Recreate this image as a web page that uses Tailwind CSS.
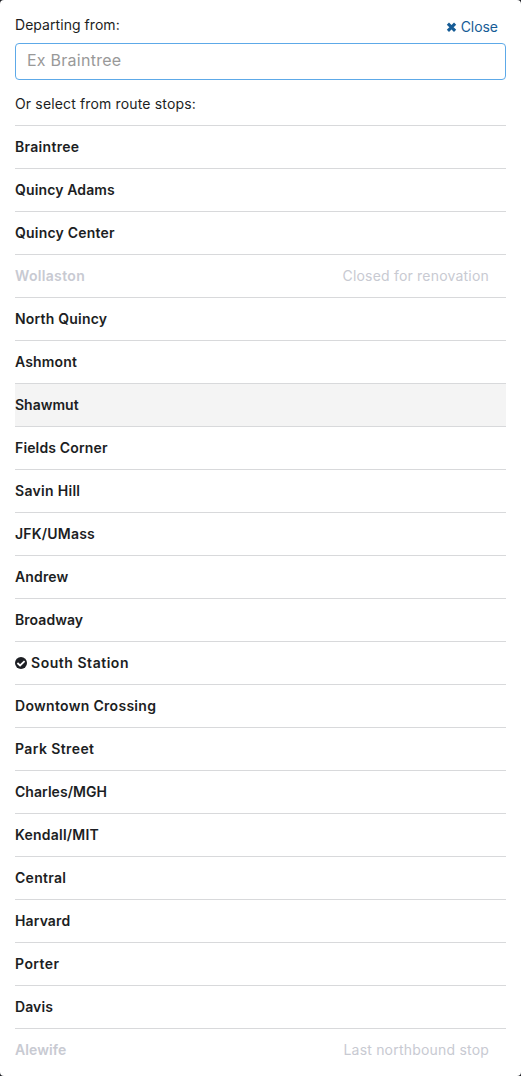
<!DOCTYPE html>
<html lang="en">
<head>
<meta charset="utf-8">
<title>Departing from</title>
<script src="https://cdn.jsdelivr.net/npm/@tailwindcss/browser@4"></script>
</head>
<body class="bg-[#1c1e23] font-['Inter',sans-serif] text-sm leading-[21px] text-[#1c1e23]">
<main class="h-[1076px] w-full overflow-hidden rounded bg-white px-[15px] pt-[14px]">
  <header class="flex h-[29px] items-start justify-between">
    <label for="stop" class="block tracking-[0.05px]">Departing from:</label>
    <a href="#" class="mr-2 mt-[2px] flex items-center gap-1 text-[#165c96]">
      <svg class="h-[14px] w-[11px]" viewBox="0 0 11 14"><path d="M1.9 3.6L9.1 10.8M9.1 3.6L1.9 10.8" fill="none" stroke="currentColor" stroke-width="3.1"/></svg>
      <span class="tracking-[-0.05px]">Close</span>
    </a>
  </header>
  <input id="stop" class="block h-[37px] w-full rounded border border-[#5da9e8] px-[11px] pb-[3px] text-base tracking-[0.25px] outline-none placeholder:text-[#999]" placeholder="Ex Braintree">
  <p class="mt-[13px] h-[32px] tracking-[0.15px]">Or select from route stops:</p>
  <ul id="stops" class="font-semibold"></ul>
</main>
<template id="row"><li class="flex h-[43px] items-center border-t border-[#d8d9db] pb-px"><span class="name"></span><span class="note ml-auto mr-[17px] font-normal tracking-[0.2px]"></span></li></template>
<template id="check"><svg class="mr-1 mt-px h-3 w-3" viewBox="0 0 12 12"><circle cx="6" cy="6" r="6" fill="#1c1e23"/><path d="M2.4 6L5.1 8.5L9.6 4.2" fill="none" stroke="#fff" stroke-width="1.8"/></svg></template>
<script>
const notes = {Wollaston: 'Closed for renovation', Alewife: 'Last northbound stop'};
// stop name, letter spacing in px
const stops = [['Braintree',.3],['Quincy Adams',.13],['Quincy Center',.2],['Wollaston',.33],['North Quincy',.2],['Ashmont',.15],['Shawmut',0],['Fields Corner',.15],['Savin Hill',.3],['JFK/UMass',.2],['Andrew',.15],['Broadway',.05],['South Station',.53],['Downtown Crossing',.3],['Park Street',.4],['Charles/MGH',.05],['Kendall/MIT',.22],['Central',.28],['Harvard',.13],['Porter',.45],['Davis',.1],['Alewife',.1]];
for (const [name, spacing] of stops) {
  const li = document.getElementById('row').content.firstElementChild.cloneNode(true);
  const label = li.querySelector('.name');
  label.textContent = name;
  label.style.letterSpacing = spacing + 'px';
  if (notes[name]) { li.querySelector('.note').textContent = notes[name]; li.classList.add('text-[#c8cad2]'); }
  if (name === 'Shawmut') li.classList.add('bg-[#f4f4f4]');
  if (name === 'South Station') li.prepend(document.getElementById('check').content.cloneNode(true));
  document.getElementById('stops').append(li);
}
</script>
</body>
</html>
